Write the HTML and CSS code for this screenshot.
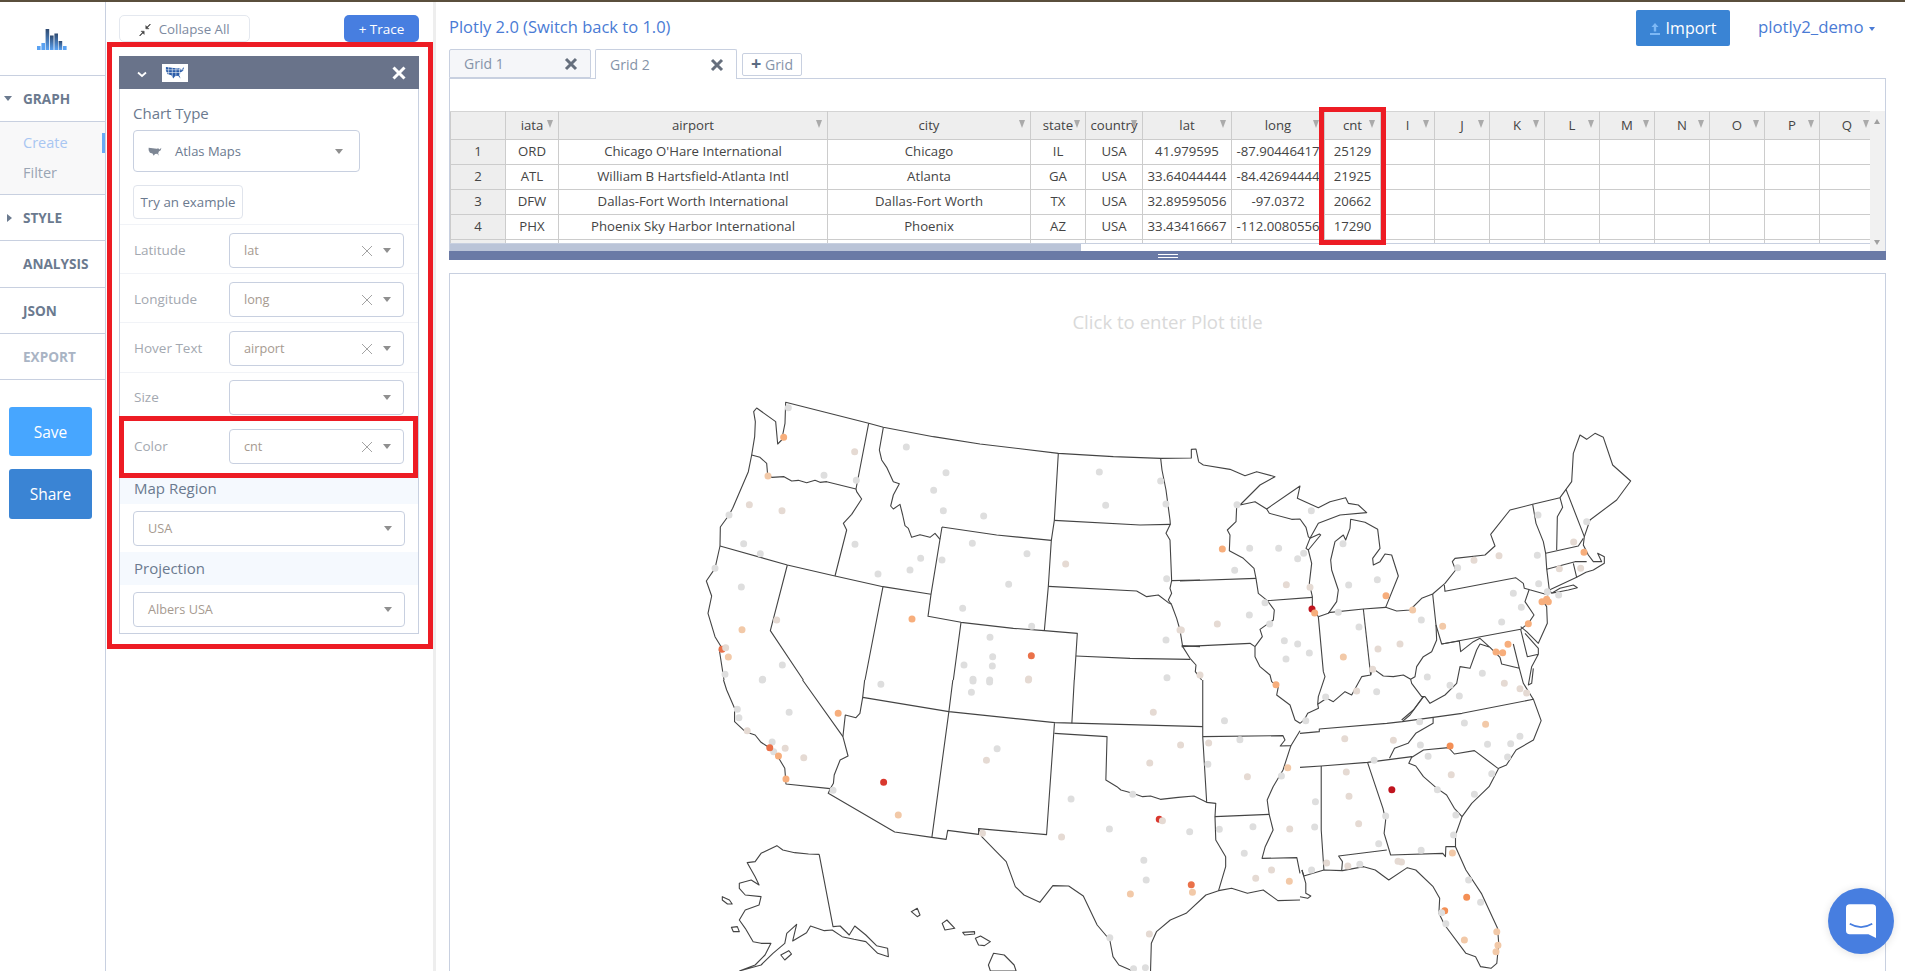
FILE: index.html
```html
<!DOCTYPE html>
<html lang="en">

<head>
    <meta charset="UTF-8">
    <title>Plotly 2.0 Workspace</title>
    <link rel="stylesheet" href="styles.css">
</head>

<body>
    <div class="top-strip"></div>
    <div class="app">
        <!-- Left navigation -->
        <nav class="side-nav">
            <div class="logo">
                <svg width="30" height="22" viewBox="0 0 30 22">
                    <defs>
                        <linearGradient id="logoBar" x1="0" y1="0" x2="0" y2="1" gradientUnits="objectBoundingBox">
                            <stop offset="0" stop-color="#2f4a70" />
                            <stop offset="1" stop-color="#5aa2f2" />
                        </linearGradient>
                    </defs>
                    <rect x="0" y="18" width="3.6" height="4" fill="#5aa2f2" />
                    <rect x="4.4" y="15" width="3.6" height="7" fill="#5aa2f2" />
                    <rect x="8.6" y="1" width="3.6" height="21" fill="url(#logoBar)" />
                    <rect x="13" y="7.5" width="3.6" height="14.5" fill="url(#logoBar)" />
                    <rect x="17.4" y="5.5" width="3.6" height="16.5" fill="url(#logoBar)" />
                    <rect x="21.6" y="13" width="3.6" height="9" fill="url(#logoBar)" />
                    <rect x="26" y="18" width="3.6" height="4" fill="#5aa2f2" />
                </svg>
            </div>
            <div class="nav-item"><span class="tri-down"></span>GRAPH</div>
            <div class="nav-sub">
                <a class="active">Create</a>
                <a>Filter</a>
            </div>
            <div class="nav-item"><span class="tri-right"></span>STYLE</div>
            <div class="nav-item tall">ANALYSIS</div>
            <div class="nav-item">JSON</div>
            <div class="nav-item muted">EXPORT</div>
            <button class="save-btn">Save</button>
            <button class="share-btn">Share</button>
        </nav>

        <!-- Trace panel -->
        <aside class="panel-col">
            <div class="panel-actions">
                <button class="collapse-btn">
                    <svg width="12" height="12" viewBox="0 0 12 12">
                        <path d="M11.5 .5 8.6 3.4 10 4.8H6.8V1.6L8 3 10.9 .1ZM.5 11.5 3.4 8.6 2 7.2H5.2V10.4L4 9 1.1 11.9Z" fill="#444" stroke="#444" stroke-width=".5" />
                    </svg>
                    Collapse All
                </button>
                <button class="trace-btn">+ Trace</button>
            </div>
            <div class="red-box">
                <div class="trace-panel">
                    <div class="trace-head">
                        <svg class="chevron" width="10" height="7" viewBox="0 0 10 7">
                            <path d="M1 1.5 5 5 9 1.5" fill="none" stroke="#fff" stroke-width="1.8" />
                        </svg>
                        <span class="usa-badge">
                            <svg width="20" height="13" viewBox="0 0 22 14">
                                <path class="usa-shape" d="M1 1 14 2.5 16 2 18 4 21 1 20 5 17 7 16 10 17 13.5 14.5 10.5 11 11 9 13.5 7 10 3 9 1 5Z" />
                                <path d="M1 4H21M1 7H19M4 1V11M8 1V13M12 1V13M16 1V11" fill="none" stroke="#fff" stroke-width=".6" />
                            </svg>
                        </span>
                        <svg class="head-close" width="14" height="14" viewBox="0 0 14 14">
                            <path d="M1.5 1.5 12.5 12.5M12.5 1.5 1.5 12.5" stroke="#fff" stroke-width="3" />
                        </svg>
                    </div>
                    <div class="chart-type">
                        <h4>Chart Type</h4>
                        <div class="dropdown wide">
                            <svg class="map-icon" width="14" height="9" viewBox="0 0 22 14">
                                <path d="M1 1 14 2.5 16 2 18 4 21 1 20 5 17 7 16 10 17 13.5 14.5 10.5 11 11 9 13.5 7 10 3 9 1 5Z" fill="#7d8694" />
                            </svg>
                            <span class="dropdown-dark">Atlas Maps</span>
                            <span class="caret"></span>
                        </div>
                        <button class="example-btn">Try an example</button>
                    </div>
                    <div class="field">
                        <label>Latitude</label>
                        <div class="dropdown"><span>lat</span><i class="clear"></i><span class="caret"></span></div>
                    </div>
                    <div class="field">
                        <label>Longitude</label>
                        <div class="dropdown"><span>long</span><i class="clear"></i><span class="caret"></span></div>
                    </div>
                    <div class="field hover-row">
                        <label>Hover Text</label>
                        <div class="dropdown"><span>airport</span><i class="clear"></i><span class="caret"></span></div>
                    </div>
                    <div class="field size-row">
                        <label>Size</label>
                        <div class="dropdown"><span></span><span class="caret"></span></div>
                    </div>
                    <div class="field color-row">
                        <label>Color</label>
                        <div class="dropdown"><span>cnt</span><i class="clear"></i><span class="caret"></span></div>
                    </div>
                    <div class="sub-head map-region">Map Region</div>
                    <div class="full-select">
                        <div class="dropdown"><span>USA</span><span class="caret"></span></div>
                    </div>
                    <div class="sub-head projection">Projection</div>
                    <div class="full-select">
                        <div class="dropdown"><span>Albers USA</span><span class="caret"></span></div>
                    </div>
                </div>
            </div>
        </aside>

        <!-- Main area -->
        <main class="main">
            <div class="main-top">
                <a class="version-link">Plotly 2.0 (Switch back to 1.0)</a>
                <button class="import-btn">
                    <svg width="12" height="14" viewBox="0 0 12 14">
                        <path d="M6 1 9.5 5H7.2V9.5H4.8V5H2.5ZM1 11H11V13H1Z" fill="#7db8f5" />
                    </svg>
                    Import
                </button>
                <a class="user-link">plotly2_demo <span class="user-caret"></span></a>
            </div>

            <div class="tabs">
                <div class="tab inactive">Grid 1<svg width="14" height="14" viewBox="0 0 14 14"><path d="M2 2 12 12M12 2 2 12" stroke="#666f7d" stroke-width="3" /></svg></div>
                <div class="tab">Grid 2<svg width="14" height="14" viewBox="0 0 14 14"><path d="M2 2 12 12M12 2 2 12" stroke="#666f7d" stroke-width="3" /></svg></div>
                <button class="add-grid"><b>+</b> Grid</button>
            </div>

            <div class="grid-box">
                <div class="formula-bar"></div>
                <div class="sheet">
                    <div class="sheet-left">
                        <div class="table-wrap">
                            <table class="data-grid">
                                <colgroup>
                                    <col class="c-row"><col class="c-iata"><col class="c-airport"><col class="c-city"><col class="c-state"><col class="c-country"><col class="c-lat"><col class="c-long"><col class="c-cnt">
                                    <col class="c-x"><col class="c-y"><col class="c-y"><col class="c-y"><col class="c-y"><col class="c-y"><col class="c-y"><col class="c-y"><col class="c-y">
                                </colgroup>
                                <thead>
                                    <tr><th class="no-sort"></th><th>iata</th><th>airport</th><th>city</th><th>state</th><th>country</th><th>lat</th><th>long</th><th>cnt</th><th>I</th><th>J</th><th>K</th><th>L</th><th>M</th><th>N</th><th>O</th><th>P</th><th>Q</th></tr>
                                </thead>
                                <tbody>
                                    <tr><td class="row-no">1</td><td>ORD</td><td>Chicago O'Hare International</td><td>Chicago</td><td>IL</td><td>USA</td><td>41.979595</td><td>-87.90446417</td><td>25129</td><td></td><td></td><td></td><td></td><td></td><td></td><td></td><td></td><td></td></tr>
                                    <tr><td class="row-no">2</td><td>ATL</td><td>William B Hartsfield-Atlanta Intl</td><td>Atlanta</td><td>GA</td><td>USA</td><td>33.64044444</td><td>-84.42694444</td><td>21925</td><td></td><td></td><td></td><td></td><td></td><td></td><td></td><td></td><td></td></tr>
                                    <tr><td class="row-no">3</td><td>DFW</td><td>Dallas-Fort Worth International</td><td>Dallas-Fort Worth</td><td>TX</td><td>USA</td><td>32.89595056</td><td>-97.0372</td><td>20662</td><td></td><td></td><td></td><td></td><td></td><td></td><td></td><td></td><td></td></tr>
                                    <tr><td class="row-no">4</td><td>PHX</td><td>Phoenix Sky Harbor International</td><td>Phoenix</td><td>AZ</td><td>USA</td><td>33.43416667</td><td>-112.0080556</td><td>17290</td><td></td><td></td><td></td><td></td><td></td><td></td><td></td><td></td><td></td></tr>
                                    <tr><td class="row-no"></td><td></td><td></td><td></td><td></td><td></td><td></td><td></td><td></td><td></td><td></td><td></td><td></td><td></td><td></td><td></td><td></td><td></td></tr>
                                </tbody>
                            </table>
                        </div>
                        <div class="h-scroll"><div class="h-thumb"></div></div>
                        <div class="cnt-highlight"></div>
                    </div>
                    <div class="v-scroll"><span class="arrow-up"></span><span class="arrow-down"></span></div>
                </div>
                <div class="drag-bar"><span></span></div>
            </div>

            <div class="plot-box">
                <div class="plot-title">Click to enter Plot title</div>
                <svg class="map" width="1435" height="631" viewBox="450 340 1435 631">
                    <!-- north west -->
                    <g transform="translate(680 380) scale(.33333)">
                        <path class="st" d="M120 498 121 441 147 405 158 385 205 275 215 225 224 170 226 125 221 95 230 84 287 125 293 192 305 180 315 130 317 67 566 130 610 142 760 170 900 192 1135 220 1300 230 1442 235 1534 234 1534 208 1548 207 1556 245" />
                        <path class="st" d="M215 225 240 232 260 250 263 285 275 292 312 290 335 303 355 301 380 308 405 301 420 307 440 305 528 327" />
                        <path class="st" d="M566 130 528 327 530 335 545 357 515 403 490 430 500 450 465 588" />
                        <path class="st" d="M610 142 598 210 605 240 620 262 640 305 658 311 640 345 632 378 640 387 660 373 668 405 675 437 685 445 695 472 720 464 750 472 765 460 780 478" />
                        <path class="st" d="M1135 220 1123 421 1114 481 1105 619 1093 752" />
                        <path class="st" d="M786 441 950 465 1114 481M786 441 753 643 744 709 843 727 1000 745 1093 752 1192 760 1183 900" />
                        <path class="st" d="M1105 619 1370 633 1400 650 1435 645 1465 668 1475 672" />
                        <path class="st" d="M1123 421 1380 435 1471 433" />
                        <path class="st" d="M1442 235 1446 270 1458 330 1470 420 1471 433 1458 460 1470 480 1475 602 1470 625 1475 640 1465 660 1475 675 1490 715 1500 750 1508 800 1530 835 1548 855 1546 875 1565 900" />
                        <path class="st" d="M1475 602 1560 600M1505 797 1560 800M1188 828 1350 835 1530 838" />
                        <path class="st" d="M120 498 322 555 465 588 609 620 753 643" />
                        <path class="st" d="M322 555 271 752 370 900M609 620 555 900M843 727 820 900" />
                        <path class="st" d="M120 498 105 565 79 603 95 648 84 700 105 770 122 798 118 810 132 900" />
                        <path class="dot g" d="M325 83h.01M679 201h.01M798 278h.01M761 331h.01M790 392h.01M911 408h.01M432 286h.01M529 301h.01M147 405h.01M191 491h.01M241 521h.01M105 565h.01M184 621h.01M525 493h.01M722 535h.01M786 540h.01M690 570h.01M594 582h.01M877 490h.01M1041 521h.01M986 613h.01M848 685h.01M1055 739h.01M930 772h.01M938 830h.01M852 855h.01M937 858h.01M307 855h.01M135 883h.01M248 898h.01M879 898h.01M929 900h.01M1258 276h.01M1442 303h.01M1277 376h.01M1458 372h.01M1460 596h.01M1458 780h.01M1461 893h.01" />
                        <path class="dot b" d="M524 215h.01M208 374h.01M306 392h.01M290 720h.01M1157 552h.01M1500 750h.01M1046 897h.01" />
                        <path class="dot t" d="M126 808h.01M1054 827h.01" />
                        <path class="dot b" d="M137 803h.01" />
                        <path class="dot p" d="M264 288h.01M186 749h.01M145 831h.01" />
                        <path class="dot o" d="M311 172h.01M696 717h.01" />
                    </g>
                    <!-- north east -->
                    <g transform="translate(1180 420) scale(.33333)">
                        <path class="st" d="M55 125 70 135 150 148 195 167 230 155 285 170 240 195 180 255 225 245 260 267 360 198 352 235 415 263 450 245 497 233 505 250 535 255 560 278 480 285 415 310 390 355" />
                        <path class="st" d="M260 267 268 280 335 298 360 297 378 322 385 350 390 355 418 342 422 345 385 390 378 385 390 355M385 390 395 430 388 490 397 530 397 560 415 590" />
                        <path class="st" d="M170 260 168 305 142 330 150 345 148 392 190 415 222 445 228 475 235 520 262 542 397 532" />
                        <path class="st" d="M0 483 228 475" />
                        <path class="st" d="M262 542 283 570 280 600 240 628 247 650 225 680 210 670 5 680M225 680 225 710 240 740 270 765 275 785 295 800 290 825 330 855 340 885 345 900" />
                        <path class="st" d="M415 590 430 755 435 770 415 830 413 853 440 835 460 845 495 815 515 825 545 770 572 765 578 745 610 768 640 770 670 765 692 778 705 770 710 740 730 710 755 695 770 660 768 615 758 522" />
                        <path class="st" d="M415 590 445 580 470 545 475 510 455 450 452 420 465 365 490 345 497 360 510 325 512 298 555 307 593 328 600 385 578 415 580 435 600 425 615 402 635 405 655 468 617 562" />
                        <path class="st" d="M445 578 550 567 617 562 650 573 690 570 725 535 758 522 795 490 827 450 817 425 825 415 915 405 945 378 932 343 990 270 1058 253 1140 233 1158 208 1175 185 1180 100 1200 45 1220 58 1245 40 1270 52 1298 135 1352 183 1310 240 1230 300 1213 350 1210 375 1225 405 1240 425 1265 425 1253 400 1273 410 1273 430 1240 450 1218 457 1190 472 1108 510" />
                        <path class="st" d="M550 567 572 765" />
                        <path class="st" d="M793 495 795 514 1007 473 1030 490 1033 505 1105 525M1048 507 1035 545 1062 585 1045 610 1022 628 785 672 768 615" />
                        <path class="st" d="M1058 253 1068 310 1090 365 1097 400 1100 445 1108 510 1115 520M1115 520 1165 510 1192 503 1180 495 1140 505 1115 520" />
                        <path class="st" d="M1140 233 1148 262 1132 290 1130 390M1158 208 1213 350M1097 400 1195 378 1210 355M1100 448 1185 425 1220 425M1180 430 1190 472" />
                        <path class="st" d="M1090 545 1100 560 1102 610 1075 670 1040 635 1022 620" />
                        <path class="st" d="M785 672 838 663 842 695 880 665 900 655 930 682 900 672 890 690 870 745 840 740 830 790 795 825 750 850 735 830 725 830 695 790 692 778" />
                        <path class="st" d="M1022 628 1042 710 1075 703 1075 685 1035 640M1075 703 1055 740 1045 795 1055 790 1060 745" />
                        <path class="st" d="M1000 672 1018 745 965 732 960 712M960 712 930 682M1018 745 1030 790 1060 838M730 830 700 870 665 900" />
                        <path class="dot g" d="M171 254h.01M394 272h.01M489 371h.01M353 416h.01M371 400h.01M209 385h.01M296 385h.01M164 451h.01M506 495h.01M592 479h.01M475 577h.01M255 548h.01M208 585h.01M269 612h.01M313 662h.01M353 672h.01M388 699h.01M318 717h.01M537 621h.01M724 600h.01M742 771h.01M810 796h.01M838 828h.01M907 760h.01M1000 520h.01M1024 562h.01M965 606h.01M1076 491h.01M1072 406h.01M1074 285h.01M1220 305h.01M1102 515h.01M1136 525h.01M833 443h.01M437 831h.01M590 815h.01" />
                        <path class="dot b" d="M112 612h.01M319 494h.01M882 421h.01M957 407h.01M1181 366h.01M1138 446h.01M1202 445h.01M594 687h.01M660 672h.01M578 748h.01M530 813h.01M973 790h.01M1020 806h.01M1040 819h.01M4 630h.01M60 765h.01M390 502h.01" />
                        <path class="dot p" d="M490 711h.01M698 570h.01M788 619h.01" />
                        <path class="dot o" d="M127 387h.01M618 527h.01M288 794h.01M1212 397h.01M984 673h.01M948 696h.01M968 698h.01M1045 611h.01M1086 545h.01M1100 538h.01M1105 545h.01" />
                        <path class="dot r" d="M396 567h.01" />
                        <path class="dot o" d="M404 579h.01" />
                    </g>
                    <!-- south west, texas, alaska, hawaii -->
                    <g transform="translate(680 680) scale(.39541 .33333)">
                        <path class="st" d="M110 0 118 30 138 85 138 125 165 155 190 165 205 187 228 205 245 225 265 265 268 312 380 326 375 340 543 456 637 472 673 478 677 451 755 463 755 446 927 464 947 130" />
                        <path class="st" d="M380 326 388 310 390 285 405 240 425 228 412 170 418 105 445 113 455 100 462 52 680 95 948 128 1322 140" />
                        <path class="st" d="M310 0 412 170M467 0 462 52M690 0 680 95 637 472M997 0 991 130" />
                        <path class="st" d="M947 160 1080 170 1077 300 1105 320 1115 330 1145 340 1170 350 1190 348 1215 358 1260 352 1300 348 1332 367 1355 370 1353 410 1490 403" />
                        <path class="st" d="M755 446 763 470 800 515 825 545 848 620 870 645 910 667 943 617 983 618 1020 648 1055 735 1087 780 1095 830 1110 855 1145 873" />
                        <path class="st" d="M1190 873 1192 790 1205 755 1240 720 1280 700 1330 645 1362 632 1395 625 1435 640 1475 630 1512 662 1568 660" />
                        <path class="st" d="M1353 410 1355 480 1380 530 1380 560 1362 632" />
                        <path class="st" d="M1322 0 1322 170 1332 367M1322 170 1525 167 1530 180 1518 198 1545 197 1568 152" />
                        <path class="st" d="M1545 197 1525 270 1500 320 1485 360 1490 403 1500 450 1480 500 1472 535 1560 533 1568 580" />
                        <path class="st" d="M1555 120 1568 130" />
                        <path class="st" d="M352 523 387 740 405 738 428 765 442 738 470 765 497 797 525 805 527 830 500 820 470 785 440 778 410 770 385 750 365 752 330 738 320 758 285 783 295 733 270 760 265 790 235 820 205 855 150 873M352 523 325 522 290 518 260 510 245 497 205 520 190 545 170 548 190 590 200 615 180 600 150 610 150 625 165 645 205 650 200 675 165 690 150 720 165 745 185 785 205 790 230 790 215 825 190 855 150 873" />
                        <path class="st" d="M107 650 125 660 132 672 120 672 107 660ZM130 742 145 740 150 755 135 755ZM255 825 275 812 282 822 265 840Z" />
                        <path class="st" d="M585 695 600 685 607 705 600 710ZM663 730 675 720 695 745 670 750ZM715 757 745 755 745 762 720 765ZM747 775 760 768 785 785 770 797 755 795ZM780 855 793 820 820 825 845 855 850 873H785Z" />
                        <path class="dot g" d="M208 0h.01M508 13h.01M741 3h.01M783 6h.01M737 37h.01M145 88h.01M149 113h.01M276 97h.01M233 186h.01M237 215h.01M802 206h.01M1145 343h.01M1086 447h.01M989 357h.01M1173 541h.01M1179 600h.01M1087 773h.01M1147 866h.01M1177 863h.01M1289 455h.01M1335 253h.01M1416 179h.01M1377 122h.01M1364 448h.01M1449 440h.01M1427 520h.01M1521 288h.01M387 331h.01" />
                        <path class="dot b" d="M881 0h.01M170 152h.01M266 205h.01M313 233h.01M775 241h.01M765 460h.01M965 471h.01M1266 195h.01M1188 249h.01M1197 97h.01M1337 189h.01M1435 290h.01M1496 570h.01M1456 595h.01M1542 447h.01M1187 762h.01" />
                        <path class="dot p" d="M552 405h.01M1139 642h.01M1296 637h.01M1537 263h.01M1541 604h.01" />
                        <path class="dot o" d="M400 100h.01M249 228h.01M268 297h.01" />
                        <path class="dot t" d="M227 203h.01M1293 614h.01" />
                        <path class="dot rs" d="M515 307h.01M1212 418h.01" />
                        <path class="dot b" d="M1220 422h.01" />
                    </g>
                    <!-- south east -->
                    <g transform="translate(1300 680) scale(.38585 .33333)">
                        <path class="st" d="M46 73 48 85 20 100 12 118 0 130M0 160 50 155 50 147 225 130 265 125 345 112 420 100 605 58 625 122 605 180 560 210 535 255 515 265 490 320 445 370 420 410 403 465 403 500 430 570 470 640 512 745 515 790 510 850 495 865 468 860 455 830 430 820 375 735 360 700 362 655 345 620 300 570 278 563 230 600 195 570 165 560 110 572 62 570 10 588 5 570" />
                        <path class="st" d="M345 112 345 130 300 160 280 190 245 205 232 235M265 125 285 105 320 50" />
                        <path class="st" d="M0 262 55 258 175 247 290 230 282 250 300 258 320 290 355 325 380 345 400 385 420 410M290 232 320 210 385 203 400 222 452 212 513 265" />
                        <path class="st" d="M55 258 55 450 62 570M175 247 215 385 222 420 218 460 235 525 370 520 377 530 378 500 403 500M225 510 100 528 110 545 108 572" />
                        <path class="st" d="M5 570 15 610 15 640 28 648 20 655 0 650" />
                        <path class="dot g" d="M310 125h.01M426 129h.01M312 195h.01M486 193h.01M546 191h.01M570 169h.01M332 229h.01M192 241h.01M497 281h.01M538 231h.01M356 329h.01M452 343h.01M40 365h.01M404 405h.01M222 408h.01M38 441h.01M398 465h.01M204 491h.01M314 511h.01M437 600h.01M468 667h.01M378 731h.01M30 570h.01M155 553h.01M15 122h.01" />
                        <path class="dot b" d="M116 176h.01M242 181h.01M120 276h.01M392 284h.01M127 349h.01M152 431h.01M69 549h.01M124 558h.01M254 544h.01M263 546h.01" />
                        <path class="dot p" d="M481 133h.01M395 519h.01M510 755h.01M513 796h.01M426 780h.01M508 815h.01" />
                        <path class="dot d" d="M389 198h.01M432 652h.01M375 692h.01" />
                        <path class="dot g" d="M367 698h.01" />
                        <path class="dot r" d="M238 329h.01" />
                    </g>
                </svg>
            </div>
        </main>
    </div>

    <!-- Chat launcher -->
    <div class="chat-bubble">
        <svg width="30" height="34" viewBox="0 0 32 36">
            <path d="M4 0H28A4 4 0 0 1 32 4V36L24 32H4A4 4 0 0 1 0 28V4A4 4 0 0 1 4 0Z" fill="#fff" />
            <path d="M4 21Q16 28 28 21" fill="none" stroke="#477ee0" stroke-width="1.8" />
        </svg>
    </div>
</body>

</html>
```

FILE: styles.css
```css
/* General Styles */
* {
    box-sizing: border-box;
}

html,
body {
    margin: 0;
    padding: 0;
    height: 100%;
    overflow: hidden;
    background-color: white;
    font-family: "Open Sans", sans-serif;
}

button {
    font-family: "Open Sans", sans-serif;
    cursor: pointer;
}

.top-strip {
    height: 2px;
    background-color: #5a4f3c;
}

.app {
    display: flex;
    height: 969px;
}

/* Left Navigation */
.side-nav {
    width: 106px;
    flex: none;
    border-right: 1px solid #c8d0e0;
    display: flex;
    flex-direction: column;
}

.logo {
    height: 74px;
    flex: none;
    border-bottom: 1px solid #c8d0e0;
    display: flex;
    justify-content: center;
    padding-top: 26px;
    padding-right: 1px;
}

.nav-item {
    position: relative;
    height: 46px;
    flex: none;
    border-bottom: 1px solid #c8d0e0;
    padding-left: 23px;
    line-height: 45px;
    font-size: 13.6px;
    font-weight: 700;
    color: #6b7a8f;
}

.nav-item.tall {
    height: 47px;
}

.nav-item.muted {
    color: #a9b4c4;
}

.tri-down {
    position: absolute;
    left: 4px;
    top: 20px;
    border-left: 4.5px solid transparent;
    border-right: 4.5px solid transparent;
    border-top: 5px solid #6b7a8f;
}

.tri-right {
    position: absolute;
    left: 7px;
    top: 19px;
    border-top: 4.5px solid transparent;
    border-bottom: 4.5px solid transparent;
    border-left: 5px solid #6b7a8f;
}

.nav-sub {
    height: 73px;
    flex: none;
    background-color: #f8f8f9;
    border-bottom: 1px solid #c8d0e0;
    padding: 6px 0 0 23px;
    font-size: 14.5px;
    color: #9aa5b4;
    position: relative;
}

.nav-sub a {
    display: block;
    line-height: 30px;
}

.nav-sub .active {
    color: #a8c6f2;
}

.nav-sub .active::after {
    content: "";
    position: absolute;
    right: 0;
    top: 11px;
    width: 3px;
    height: 20px;
    background-color: #69aaf5;
}

.save-btn,
.share-btn {
    width: 83px;
    margin-left: 9px;
    border: none;
    border-radius: 3px;
    color: white;
    font-size: 15.5px;
    padding: 0;
    flex: none;
}

.save-btn {
    height: 49px;
    margin-top: 27px;
    background-color: #47a6ff;
}

.share-btn {
    height: 50px;
    margin-top: 13px;
    background-color: #3a84d4;
}

/* Trace Panel */
.panel-col {
    width: 330px;
    flex: none;
    padding-left: 1px;
    border-right: 3px solid #eeeeee;
}

.panel-actions {
    height: 40px;
    padding: 13px 14px 0 12px;
    display: flex;
    justify-content: space-between;
}

.collapse-btn {
    width: 131px;
    height: 27px;
    background-color: white;
    border: 1px solid #e4e8ef;
    border-radius: 5px;
    color: #7d8aa0;
    font-size: 13.3px;
    padding: 0;
}

.collapse-btn svg {
    vertical-align: -2px;
    margin-right: 4px;
}

.trace-btn {
    width: 75px;
    height: 27px;
    background-color: #477ee0;
    border: none;
    border-radius: 5px;
    color: white;
    font-size: 13.5px;
    padding: 0;
}

.red-box {
    width: 326px;
    height: 607px;
    border: 5px solid #ed1c24;
    padding: 9px 9px 10px 7px;
}

.trace-panel {
    height: 578px;
    border: 1px solid #c8d0e0;
}

.trace-head {
    height: 33px;
    margin: 0 -1px;
    margin-top: -1px;
    background-color: #69738a;
    display: flex;
    align-items: center;
    position: relative;
}

.chevron {
    margin-left: 18px;
    margin-top: 3px;
}

.usa-badge {
    width: 26px;
    height: 18px;
    margin-left: 15px;
    background-color: white;
    display: flex;
    align-items: flex-start;
    justify-content: center;
    padding-top: 2px;
}

.usa-shape {
    fill: #2a5ca8;
}

.head-close {
    margin-left: auto;
    margin-right: 13px;
}

.chart-type {
    height: 136px;
    padding: 14px 13px 0 13px;
    border-bottom: 1px solid #f1f3f7;
}

.chart-type h4 {
    margin: 0 0 7px;
    font-size: 15px;
    font-weight: 400;
    line-height: 20px;
    color: #6b7a8f;
}

.dropdown {
    position: relative;
    width: 175px;
    height: 35px;
    border: 1px solid #c8d0e0;
    border-radius: 4px;
    padding-left: 14px;
    font-size: 12.7px;
    line-height: 33px;
    color: #a69a90;
    background-color: white;
}

.dropdown.wide {
    width: 227px;
    height: 42px;
    line-height: 40px;
    display: flex;
    align-items: center;
}

.map-icon {
    margin-right: 13px;
}

.dropdown-dark {
    color: #6b7a8f;
    font-size: 13px;
}

.caret {
    position: absolute;
    right: 12px;
    top: 14px;
    border-left: 4.5px solid transparent;
    border-right: 4.5px solid transparent;
    border-top: 5px solid #8f8f8f;
}

.dropdown.wide .caret {
    right: 16px;
    top: 18px;
}

.clear {
    position: absolute;
    right: 31px;
    top: 12px;
    width: 10px;
    height: 10px;
    background:
        linear-gradient(45deg, transparent 46%, #a3a3a3 46%, #a3a3a3 54%, transparent 54%),
        linear-gradient(-45deg, transparent 46%, #a3a3a3 46%, #a3a3a3 54%, transparent 54%);
}

.example-btn {
    display: block;
    width: 110px;
    height: 34px;
    margin-top: 13px;
    padding: 0;
    background-color: white;
    border: 1px solid #e0e4ec;
    border-radius: 4px;
    color: #6b7a8f;
    font-size: 13.3px;
}

.field {
    height: 49px;
    padding: 8px 14px 0 14px;
    display: flex;
    justify-content: space-between;
    border-bottom: 1px solid #f1f3f7;
}

.field label {
    line-height: 35px;
    font-size: 13.5px;
    color: #a3a8b0;
}

.hover-row {
    height: 50px;
}

.size-row {
    height: 43px;
    padding-top: 7px;
    border-bottom: none;
}

.color-row {
    height: 62px;
    margin-left: -1px;
    border: 5px solid #ed1c24;
    padding: 8px 9px 0 10px;
}

.sub-head {
    padding-left: 14px;
    background-color: #f5f9fe;
    font-size: 15px;
    color: #6b7a8f;
}

.map-region {
    height: 26px;
    line-height: 20px;
}

.projection {
    height: 33px;
    line-height: 33px;
}

.full-select {
    padding: 7px 13px 6px;
}

.full-select .dropdown {
    width: 100%;
}

/* Main Area */
.main {
    flex: 1;
    min-width: 0;
    padding: 0 19px 0 13px;
}

.main-top {
    height: 47px;
    display: flex;
    align-items: flex-start;
}

.version-link {
    font-size: 16.5px;
    line-height: 22px;
    margin-top: 14px;
    color: #4a7bd5;
}

.import-btn {
    margin-left: auto;
    margin-top: 8px;
    width: 94px;
    height: 36px;
    border: none;
    border-radius: 2px;
    background-color: #3a84d4;
    color: white;
    font-size: 16px;
    padding: 0;
}

.import-btn svg {
    vertical-align: -2px;
}

.user-link {
    margin-left: 28px;
    width: 128px;
    margin-top: 14px;
    font-size: 16.8px;
    line-height: 22px;
    color: #4a7bd5;
    white-space: nowrap;
}

.user-caret {
    display: inline-block;
    vertical-align: 2px;
    margin-left: 1px;
    border-left: 3.5px solid transparent;
    border-right: 3.5px solid transparent;
    border-top: 4px solid #4a7bd5;
}

.tabs {
    height: 29px;
    display: flex;
    gap: 4px;
}

.tab {
    width: 142px;
    height: 30px;
    position: relative;
    z-index: 1;
    display: flex;
    align-items: center;
    justify-content: space-between;
    padding: 0 12px 0 14px;
    background-color: white;
    border: 1px solid #c8d0e0;
    border-bottom: none;
    border-radius: 2px 2px 0 0;
    font-size: 14px;
    color: #8593a8;
}

.tab.inactive {
    background-color: #f5f6f9;
    height: 29px;
    border-bottom: 1px solid #c8d0e0;
}

.add-grid {
    width: 60px;
    height: 23px;
    margin-top: 4px;
    margin-left: 1px;
    padding: 0;
    background-color: white;
    border: 1px solid #c8d0e0;
    border-radius: 2px;
    font-size: 14px;
    color: #8593a8;
}

.add-grid b {
    font-size: 18px;
    color: #5a6b82;
    line-height: 14px;
}

/* Grid */
.grid-box {
    height: 182px;
    border: 1px solid #c8d0e0;
    border-bottom: none;
}

.formula-bar {
    height: 32px;
}

.sheet {
    display: flex;
    height: 140px;
}

.sheet-left {
    position: relative;
    width: 1420px;
    flex: none;
}

.table-wrap {
    height: 133px;
    overflow: hidden;
    border-bottom: 1px solid #c8d0e0;
}

.data-grid {
    table-layout: fixed;
    width: 1424px;
    border-collapse: collapse;
    font-size: 13.2px;
    color: #444444;
    text-align: center;
}

.c-row { width: 55px; }
.c-iata { width: 53px; }
.c-airport { width: 269px; }
.c-city { width: 203px; }
.c-state { width: 55px; }
.c-country { width: 57px; }
.c-lat { width: 89px; }
.c-long { width: 93px; }
.c-cnt { width: 56px; }
.c-x { width: 54px; }
.c-y { width: 55px; }

.data-grid th,
.data-grid td {
    border: 1px solid #cccccc;
    padding: 0;
    overflow: hidden;
    white-space: nowrap;
    line-height: 1;
}

.data-grid th {
    position: relative;
    height: 28px;
    background-color: #eeeeee;
    font-weight: 400;
    border-top: 1px solid #d4d4d4;
}

.data-grid th::after {
    content: "";
    position: absolute;
    right: 5px;
    top: 8px;
    border-left: 3.5px solid transparent;
    border-right: 3.5px solid transparent;
    border-top: 8px solid #aaaaaa;
}

.data-grid th.no-sort::after {
    display: none;
}

.data-grid td {
    height: 25px;
}

.data-grid .row-no {
    background-color: #eeeeee;
}

/* Red marker over the cnt column */
.cnt-highlight {
    position: absolute;
    left: 869px;
    top: -4px;
    width: 67px;
    height: 138px;
    border: 5px solid #ed1c24;
}

.h-scroll {
    height: 7px;
    background-color: white;
}

.h-thumb {
    width: 631px;
    height: 7px;
    background-color: #bac4d8;
}

.v-scroll {
    width: 16px;
    background-color: #f1f1f1;
    position: relative;
}

.arrow-up {
    position: absolute;
    left: 4px;
    top: 8px;
    border-left: 3.5px solid transparent;
    border-right: 3.5px solid transparent;
    border-bottom: 5px solid #a0a0a0;
}

.arrow-down {
    position: absolute;
    left: 4px;
    bottom: 6px;
    border-left: 3.5px solid transparent;
    border-right: 3.5px solid transparent;
    border-top: 5px solid #a0a0a0;
}

.drag-bar {
    height: 9px;
    margin: 0 -1px;
    background-color: #6a7aa6;
    display: flex;
    justify-content: center;
    padding-top: 3px;
}

.drag-bar span {
    width: 20px;
    height: 4px;
    border-top: 1px solid white;
    border-bottom: 1px solid white;
}

/* Plot */
.plot-box {
    margin-top: 13px;
    height: 700px;
    border: 1px solid #c8d0e0;
}

.plot-title {
    height: 66px;
    padding-top: 36px;
    text-align: center;
    font-size: 18.6px;
    line-height: 23px;
    color: #d9d9d9;
}

.map {
    display: block;
}

.st {
    fill: none;
    stroke: #444444;
    stroke-width: 1.1;
    stroke-linejoin: round;
    vector-effect: non-scaling-stroke;
}

.dot {
    fill: none;
    stroke-width: 7;
    stroke-linecap: round;
    vector-effect: non-scaling-stroke;
}

.dot.g { stroke: #dedede; }
.dot.b { stroke: #e5dad3; }
.dot.p { stroke: #f2c9a8; }
.dot.o { stroke: #f7ae7c; }
.dot.d { stroke: #f48f55; }
.dot.t { stroke: #ea7149; }
.dot.rs { stroke: #d9382e; }
.dot.r { stroke: #c0141e; }

/* Chat launcher */
.chat-bubble {
    position: fixed;
    left: 1828px;
    top: 888px;
    width: 66px;
    height: 66px;
    border-radius: 50%;
    background-color: #477ee0;
    box-shadow: 0 1px 8px rgba(0, 0, 0, 0.12);
    display: flex;
    align-items: center;
    justify-content: center;
}
```
